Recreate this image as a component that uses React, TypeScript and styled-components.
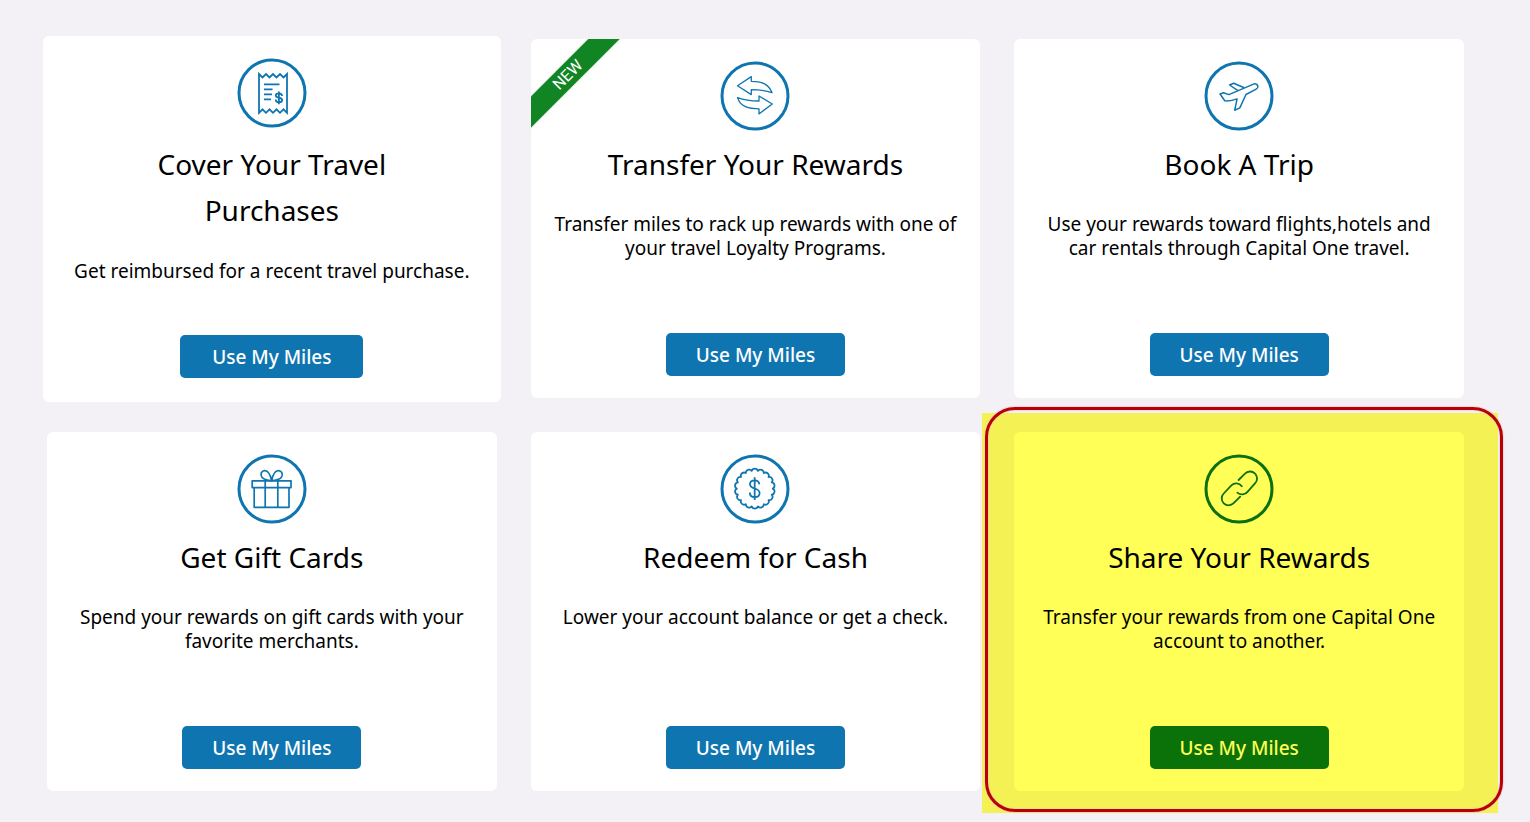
import React from "react";
import styled, { createGlobalStyle, css } from "styled-components";

const GlobalStyle = createGlobalStyle`
  *, *::before, *::after { box-sizing: border-box; }
  body {
    margin: 0;
    background: #f3f1f5;
    color: #000;
    font-family: "Noto Sans", "Open Sans", sans-serif;
  }
`;

const Page = styled.main`
  padding: 39px 66px 31px 47px;
`;

const Grid = styled.div`
  display: grid;
  grid-template-columns: repeat(3, minmax(0, 1fr));
  grid-auto-rows: minmax(359px, auto);
  gap: 34px;
`;

type Tone = "plain" | "raised" | "marked";

const Cell = styled.div<{ $tone: Tone }>`
  position: relative;
  display: flex;
  ${({ $tone }) =>
    $tone === "raised" &&
    css`
      margin: -3px -4px -4px;
    `}
  ${({ $tone }) =>
    $tone === "marked" &&
    css`
      &::before {
        content: "";
        position: absolute;
        inset: -19px -34px -22px -32px;
        background: #f4f155;
      }
      &::after {
        content: "";
        position: absolute;
        inset: -25px -39px -21px -29px;
        border: 3px solid #b80009;
        border-radius: 30px;
        box-shadow: 0 0 1px 1px #f3c4c088, inset 0 0 1px 1px #f3c4c088;
        pointer-events: none;
      }
    `}
`;

const Card = styled.section<{ $tone: Tone }>`
  position: relative;
  z-index: 1;
  flex: 1;
  min-width: 0;
  display: flex;
  flex-direction: column;
  align-items: center;
  padding: ${({ $tone }) => ($tone === "raised" ? "22px 20px 24px" : "22px 20px")};
  border-radius: 6px;
  overflow: hidden;
  text-align: center;
  background: ${({ $tone }) => ($tone === "marked" ? "#ffff57" : "#fff")};
  color: ${({ $tone }) => ($tone === "marked" ? "#0b7010" : "#0f75b0")};
`;

const Icon = styled.svg`
  flex: none;
  width: 70px;
  height: 70px;
  fill: none;
  stroke: currentColor;
  stroke-linejoin: round;
`;

const Title = styled.h2<{ $tone: Tone }>`
  margin: ${({ $tone }) => ($tone === "raised" ? "13px 0 26px" : "10px 0 25px")};
  max-width: ${({ $tone }) => ($tone === "raised" ? "300px" : "none")};
  color: #000;
  font-size: 28px;
  font-weight: 400;
  line-height: 46px;
`;

const Description = styled.p`
  margin: 0;
  max-width: 408px;
  color: #000;
  font-size: 19px;
  line-height: 24px;
`;

const Action = styled.button<{ $tone: Tone }>`
  margin-top: auto;
  width: ${({ $tone }) => ($tone === "raised" ? "183px" : "179px")};
  height: 43px;
  padding: 0;
  border: 0;
  border-radius: 5px;
  background: ${({ $tone }) => ($tone === "marked" ? "#0b7209" : "#0f75b0")};
  color: ${({ $tone }) => ($tone === "marked" ? "#ffff57" : "#fff")};
  font: 500 19px/24px "Noto Sans", "Open Sans", sans-serif;
  cursor: pointer;
`;

const Corner = styled.div`
  position: absolute;
  top: 0;
  left: 0;
  width: 96px;
  height: 96px;
  overflow: hidden;
`;

const Ribbon = styled.span`
  position: absolute;
  top: 25px;
  left: -33px;
  width: 140px;
  background: #118423;
  box-shadow: 0 0 2px #11842366;
  color: #fff;
  font: 400 16px/22px Roboto, sans-serif;
  transform: rotate(-45deg);
`;

const Ring = () => <circle cx="35" cy="35" r="33" strokeWidth="3" />;

const ReceiptIcon = () => (
  <Icon viewBox="0 0 70 70" aria-hidden="true">
    <Ring />
    <g strokeWidth="1.8" strokeLinejoin="miter">
      <path d="M22 16l3.5 3.5 3.5-3.5 3.5 3.5 3.5-3.5 3.5 3.5 3.5-3.5 3.5 3.5 3.5-3.5V54.8l-3.5-3.5-3.5 3.5-3.5-3.5-3.5 3.5-3.5-3.5-3.5 3.5-3.5-3.5-3.5 3.5z" />
      <path d="M27 26.3h15.5M27 31.3h8.5M27 36.3h8M27 41.3h7" />
      <path d="M41.9 33.4V46.2M45 38.1C45 36 43.6 35.4 41.9 35.4C40.1 35.4 38.8 36.2 38.8 37.6C38.8 40.7 45.1 38.8 45.1 42C45.1 43.5 43.8 44.3 41.9 44.3C40 44.3 38.7 43.5 38.7 41.5" />
    </g>
  </Icon>
);

const TransferIcon = () => (
  <Icon viewBox="0 0 70 70" aria-hidden="true">
    <Ring />
    <g strokeWidth="1.3">
      <path d="M17.5 24.7L31.3 15.6V20.3C41 20.4 48.5 22.5 52 31.6C45 29.2 39 28.6 31.3 28.6V33.6z" />
      <path d="M17.5 36.6C25 39.4 31 40 39 40V35L52.3 43L39 52.9V47.8C30 47.6 20.5 46.5 17.5 36.6z" />
    </g>
  </Icon>
);

const PlaneIcon = () => (
  <Icon viewBox="0 0 70 70" aria-hidden="true">
    <Ring />
    <g strokeWidth="1.5">
      <path d="M49.5 23.1C51.5 22.3 53.8 23.6 53.9 25.4C54 26.8 53.4 27.6 52.2 28.2L42 33.5L35.8 46.9L30.7 49.2L33.1 37.9C28.5 39.7 25 40.2 20.8 39.8L16 33L19.6 31.7L24.9 33.6z" />
      <path d="M40.3 26.8L29.7 22.3L25.6 24L34 29.6" />
    </g>
  </Icon>
);

const GiftIcon = () => (
  <Icon viewBox="0 0 70 70" aria-hidden="true">
    <Ring />
    <g strokeWidth="1.7">
      <path d="M15.2 26.8H54V33.6H15.2zM17.2 33.6V53.3H52V33.6M28.2 26.8V53.3M40.8 26.8V53.3" />
      <path d="M34.6 26.6C33 19 30.5 16.3 27.4 16.6C24.2 17 23 20.7 25 23.3C26.6 25.4 29.5 26.4 34.6 26.6C39.7 26.4 42.8 25.4 44.4 23.3C46.3 20.7 45 17 41.8 16.6C38.7 16.3 36.2 19 34.6 26.6z" />
    </g>
  </Icon>
);

const SCALLOPS = 18;
const scallopPoint = (i: number) => {
  const a = (i / SCALLOPS) * Math.PI * 2;
  return `${(34.8 + 18 * Math.cos(a)).toFixed(2)} ${(34.6 + 18 * Math.sin(a)).toFixed(2)}`;
};
const sealPath =
  `M${scallopPoint(0)}` +
  Array.from({ length: SCALLOPS }, (_, i) => `A3.3 3.3 0 0 1 ${scallopPoint(i + 1)}`).join("") +
  "z";

const CashIcon = () => (
  <Icon viewBox="0 0 70 70" aria-hidden="true">
    <Ring />
    <g strokeWidth="1.8">
      <path d={sealPath} />
      <path d="M34.7 23.2V46M39.4 30.4C39 27.4 37 26.3 34.7 26.3C32 26.3 30 27.8 30 30.2C30 35.6 39.6 33.4 39.6 38.9C39.6 41.4 37.6 43 34.7 43C31.8 43 29.8 41.4 29.8 38.4" />
    </g>
  </Icon>
);

const LinkIcon = () => (
  <Icon viewBox="0 0 70 70" aria-hidden="true">
    <Ring />
    <g strokeWidth="1.8" strokeLinecap="round">
      <path d="M34.6 26L41 19.7A6.9 6.9 0 0 1 51.2 29.2L43.7 37.6A6.9 6.9 0 0 1 33.4 38.6" />
      <path d="M37.8 32.2A6.9 6.9 0 0 0 27.4 31.4L19.7 39.5A6.9 6.9 0 0 0 29.6 49.2L36.2 42.6" />
    </g>
  </Icon>
);

interface Option {
  title: string;
  text: string;
  icon: React.ReactNode;
  tone?: Tone;
  isNew?: boolean;
}

const options: Option[] = [
  { title: "Cover Your Travel Purchases", text: "Get reimbursed for a recent travel purchase.", icon: <ReceiptIcon />, tone: "raised" },
  { title: "Transfer Your Rewards", text: "Transfer miles to rack up rewards with one of your travel Loyalty Programs.", icon: <TransferIcon />, isNew: true },
  { title: "Book A Trip", text: "Use your rewards toward flights,hotels and car rentals through Capital One travel.", icon: <PlaneIcon /> },
  { title: "Get Gift Cards", text: "Spend your rewards on gift cards with your favorite merchants.", icon: <GiftIcon /> },
  { title: "Redeem for Cash", text: "Lower your account balance or get a check.", icon: <CashIcon /> },
  { title: "Share Your Rewards", text: "Transfer your rewards from one Capital One account to another.", icon: <LinkIcon />, tone: "marked" },
];

export default function App() {
  return (
    <>
      <GlobalStyle />
      <Page>
        <Grid>
          {options.map(({ title, text, icon, tone = "plain", isNew }) => (
            <Cell key={title} $tone={tone}>
              <Card $tone={tone}>
                {isNew && (
                  <Corner>
                    <Ribbon>NEW</Ribbon>
                  </Corner>
                )}
                {icon}
                <Title $tone={tone}>{title}</Title>
                <Description>{text}</Description>
                <Action type="button" $tone={tone}>
                  Use My Miles
                </Action>
              </Card>
            </Cell>
          ))}
        </Grid>
      </Page>
    </>
  );
}
